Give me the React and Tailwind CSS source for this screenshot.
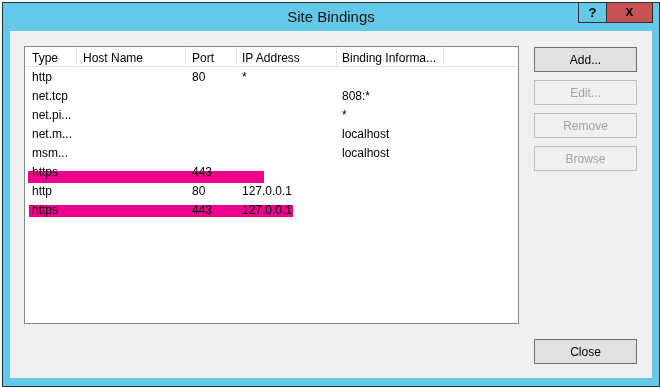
import React from "react";

const font = { fontFamily: '"Liberation Sans", Arial, sans-serif' };

const columns = [
  { label: "Type", w: "w-[52px]", pad: "pl-[7px]" },
  { label: "Host Name", w: "w-[109px]", pad: "pl-[6px]" },
  { label: "Port", w: "w-[51px]", pad: "pl-[6px]" },
  { label: "IP Address", w: "w-[100px]", pad: "pl-[5px]" },
  { label: "Binding Informa...", w: "w-[107px]", pad: "pl-[5px]" },
];

const rows = [
  ["http", "", "80", "*", ""],
  ["net.tcp", "", "", "", "808:*"],
  ["net.pi...", "", "", "", "*"],
  ["net.m...", "", "", "", "localhost"],
  ["msm...", "", "", "", "localhost"],
  ["https", "", "443", "", ""],
  ["http", "", "80", "127.0.0.1", ""],
  ["https", "", "443", "127.0.0.1", ""],
];

function SideButton({ children, disabled }) {
  return (
    <button
      className={
        "h-[25px] w-[103px] border text-[12px] " +
        (disabled
          ? "border-[#bfbfbf] bg-[#f0f0f0] text-[#a3a3a3]"
          : "border-[#707070] bg-[#e1e1e1] text-black")
      }
    >
      {children}
    </button>
  );
}

export default function App() {
  return (
    <div className="min-h-[387px] w-[660px] bg-white pl-[2px] pt-[2px]" style={font}>
      <div className="flex h-[385px] w-[658px] flex-col border border-[#2f2f2f] bg-[#64c9e9]">
        {/* title bar */}
        <div className="grid h-[28px] grid-cols-[1fr_auto_1fr]">
          <div />
          <div className="self-center pt-[1px] text-[15px] text-[#111]">Site Bindings</div>
          <div className="flex items-start justify-end pr-[6px]">
            <div className="flex h-[20px] w-[28px] items-center justify-center border-b border-l border-[#2f2f2f] text-[13px] font-bold text-black">
              ?
            </div>
            <div className="flex h-[20px] w-[47px] items-center justify-center border-x border-b border-[#2f2f2f] bg-[#c75050] pb-[3px] text-[14px] font-bold text-black">
              x
            </div>
          </div>
        </div>

        {/* client area */}
        <div className="mx-[7px] flex h-[347px] flex-col bg-[#f0f0f0] pb-[14px] pl-[14px] pr-[15px] pt-[15px]">
          <div className="flex gap-[15px]">
            <div className="relative h-[278px] w-[495px] border border-[#828790] bg-white text-[12px] text-black">
              <div className="flex h-[20px] border-b border-[#e5e5e5]">
                {columns.map((c) => (
                  <div
                    key={c.label}
                    className={`${c.w} ${c.pad} h-[19px] shrink-0 border-r border-[#e5e5e5] leading-[22px]`}
                  >
                    {c.label}
                  </div>
                ))}
              </div>
              {rows.map((r, i) => (
                <div key={i} className="flex h-[19px]">
                  {r.map((v, j) => (
                    <div key={j} className={`${columns[j].w} ${columns[j].pad} shrink-0 leading-[21px]`}>
                      {v}
                    </div>
                  ))}
                </div>
              ))}
              {/* redaction marks */}
              <div className="absolute left-[3px] top-[124px] h-[12px] w-[236px] bg-[#ec008c] mix-blend-multiply" />
              <div className="absolute left-[4px] top-[158px] h-[12px] w-[264px] bg-[#ec008c] mix-blend-multiply" />
            </div>

            <div className="flex flex-col gap-[8px] pt-[1px]">
              <SideButton>Add...</SideButton>
              <SideButton disabled>Edit...</SideButton>
              <SideButton disabled>Remove</SideButton>
              <SideButton disabled>Browse</SideButton>
            </div>
          </div>

          <div className="mt-auto flex justify-end">
            <SideButton>Close</SideButton>
          </div>
        </div>
      </div>
    </div>
  );
}
